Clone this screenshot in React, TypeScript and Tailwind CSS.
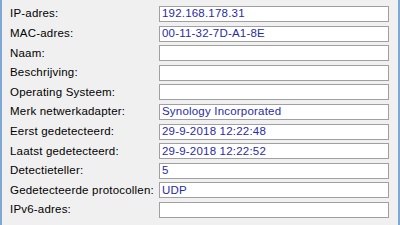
const rows: Array<{ label: string; value: string }> = [
  { label: "IP-adres:", value: "192.168.178.31" },
  { label: "MAC-adres:", value: "00-11-32-7D-A1-8E" },
  { label: "Naam:", value: "" },
  { label: "Beschrijving:", value: "" },
  { label: "Operating Systeem:", value: "" },
  { label: "Merk netwerkadapter:", value: "Synology Incorporated" },
  { label: "Eerst gedetecteerd:", value: "29-9-2018 12:22:48" },
  { label: "Laatst gedetecteerd:", value: "29-9-2018 12:22:52" },
  { label: "Detectieteller:", value: "5" },
  { label: "Gedetecteerde protocollen:", value: "UDP" },
  { label: "IPv6-adres:", value: "" },
];

export default function App() {
  return (
    <div
      className="flex h-[225px] w-[400px] border-l-2 border-r-2 border-[#7fa8d6] bg-[#f0f0f0] text-[11.5px] text-black"
      style={{ fontFamily: '"Liberation Sans", Arial, sans-serif' }}
    >
      <div className="flex w-full flex-col gap-[3.6px] pt-[6px] pl-[8px] pr-[8px]">
        {rows.map((row) => (
          <div key={row.label} className="flex h-4 items-center">
            <span className="w-[149px] shrink-0 whitespace-nowrap tracking-[0.2px]">{row.label}</span>
            <div className="flex h-4 w-[230px] items-center border border-[#a0a0a0] bg-white pl-[2px] text-[#2a2aa8] tracking-[0.2px]">
              {row.value}
            </div>
          </div>
        ))}
      </div>
    </div>
  );
}
